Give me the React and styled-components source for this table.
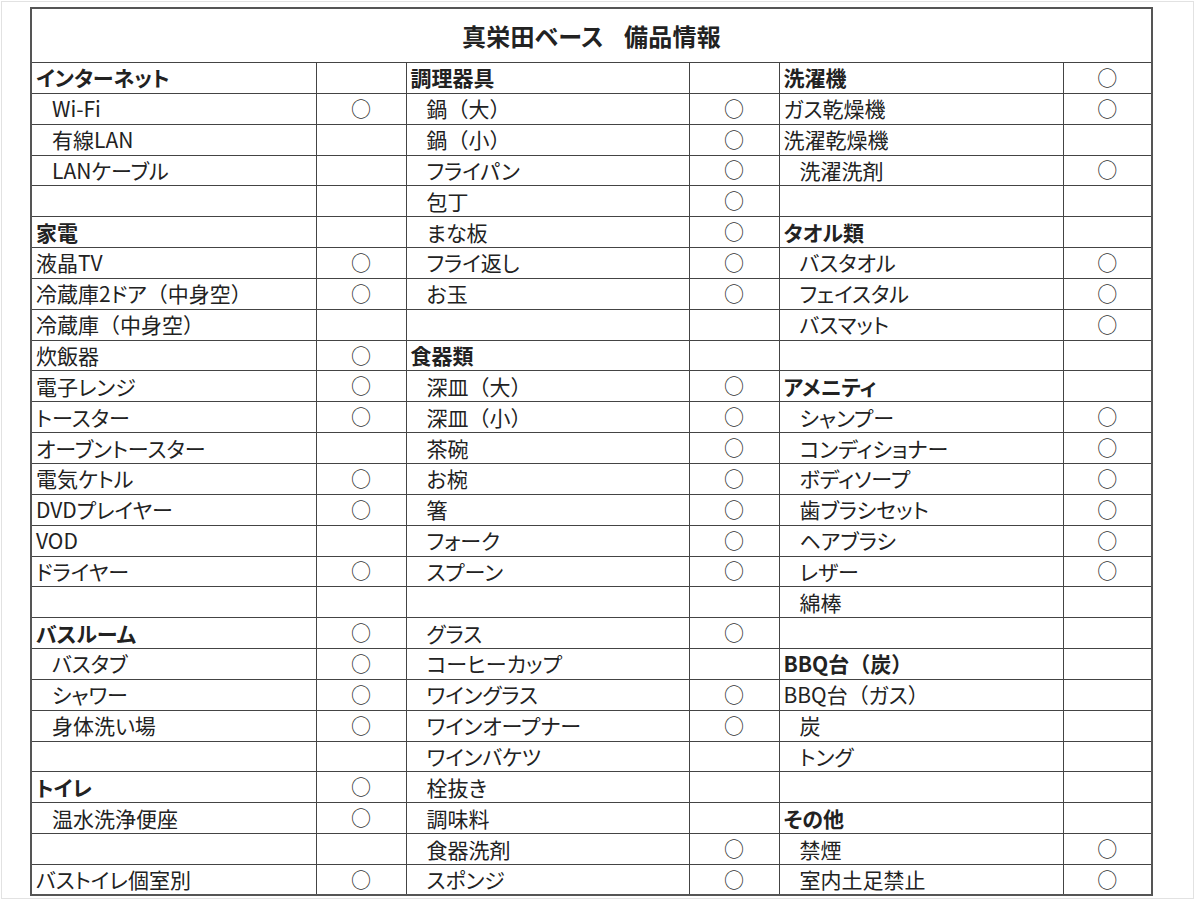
import styled, { createGlobalStyle } from "styled-components";

const GlobalStyle = createGlobalStyle`
  html, body {
    margin: 0;
    padding: 0;
    background: #ffffff;
  }
  body {
    font-family: "Noto Sans CJK JP", "Noto Sans", sans-serif;
    color: #222;
  }
`;

const Page = styled.div`
  box-sizing: border-box;
  width: 1193px;
  height: 898px;
  margin: 1px 0 0 1px;
  border: 1px solid #e2e2e2;
  padding: 5px 0 0 28px;
`;

const Sheet = styled.table`
  border-collapse: collapse;
  table-layout: fixed;
  width: 1121px;
  border: 2px solid #555;
  font-feature-settings: "palt";
`;

const Col = styled.col`
  width: ${({ $w }) => $w}px;
`;

const TitleCell = styled.th`
  height: 53px;
  padding: 0;
  border: 1px solid #444;
  font-size: 24px;
  font-weight: 700;
  color: #222;
  text-align: center;
  vertical-align: middle;
  letter-spacing: 0.3px;
`;

const TitleGap = styled.span`
  display: inline-block;
  width: 20px;
`;

const Row = styled.tr`
  height: 30.85px;
`;

const Label = styled.td`
  padding: 0 0 0 ${({ $indent }) => ($indent ? "20px" : "4px")};
  border: 1px solid #444;
  font-size: 21px;
  line-height: 1;
  font-weight: ${({ $bold }) => ($bold ? 700 : 400)};
  color: #222;
  white-space: nowrap;
  overflow: hidden;
  vertical-align: middle;
`;

// full-width brackets keep their full em, as in the original sheet
const Paren = styled.span`
  font-feature-settings: normal;
`;

const Mark = styled.td`
  padding: 0;
  border: 1px solid #444;
  font-size: 20px;
  line-height: 1;
  color: #333;
  text-align: center;
  vertical-align: middle;
`;

// [label, mark, type] type: b = bold header, i = indented, n = plain
const col1 = [
  ["インターネット", "", "b"],
  ["Wi-Fi", "○", "i"],
  ["有線LAN", "", "i"],
  ["LANケーブル", "", "i"],
  ["", "", "n"],
  ["家電", "", "b"],
  ["液晶TV", "○", "n"],
  ["冷蔵庫2ドア（中身空）", "○", "n"],
  ["冷蔵庫（中身空）", "", "n"],
  ["炊飯器", "○", "n"],
  ["電子レンジ", "○", "n"],
  ["トースター", "○", "n"],
  ["オーブントースター", "", "n"],
  ["電気ケトル", "○", "n"],
  ["DVDプレイヤー", "○", "n"],
  ["VOD", "", "n"],
  ["ドライヤー", "○", "n"],
  ["", "", "n"],
  ["バスルーム", "○", "b"],
  ["バスタブ", "○", "i"],
  ["シャワー", "○", "i"],
  ["身体洗い場", "○", "i"],
  ["", "", "n"],
  ["トイレ", "○", "b"],
  ["温水洗浄便座", "○", "i"],
  ["", "", "n"],
  ["バストイレ個室別", "○", "n"],
];

const col2 = [
  ["調理器具", "", "b"],
  ["鍋（大）", "○", "i"],
  ["鍋（小）", "○", "i"],
  ["フライパン", "○", "i"],
  ["包丁", "○", "i"],
  ["まな板", "○", "i"],
  ["フライ返し", "○", "i"],
  ["お玉", "○", "i"],
  ["", "", "n"],
  ["食器類", "", "b"],
  ["深皿（大）", "○", "i"],
  ["深皿（小）", "○", "i"],
  ["茶碗", "○", "i"],
  ["お椀", "○", "i"],
  ["箸", "○", "i"],
  ["フォーク", "○", "i"],
  ["スプーン", "○", "i"],
  ["", "", "n"],
  ["グラス", "○", "i"],
  ["コーヒーカップ", "", "i"],
  ["ワイングラス", "○", "i"],
  ["ワインオープナー", "○", "i"],
  ["ワインバケツ", "", "i"],
  ["栓抜き", "", "i"],
  ["調味料", "", "i"],
  ["食器洗剤", "○", "i"],
  ["スポンジ", "○", "i"],
];

const col3 = [
  ["洗濯機", "○", "b"],
  ["ガス乾燥機", "○", "n"],
  ["洗濯乾燥機", "", "n"],
  ["洗濯洗剤", "○", "i"],
  ["", "", "n"],
  ["タオル類", "", "b"],
  ["バスタオル", "○", "i"],
  ["フェイスタル", "○", "i"],
  ["バスマット", "○", "i"],
  ["", "", "n"],
  ["アメニティ", "", "b"],
  ["シャンプー", "○", "i"],
  ["コンディショナー", "○", "i"],
  ["ボディソープ", "○", "i"],
  ["歯ブラシセット", "○", "i"],
  ["ヘアブラシ", "○", "i"],
  ["レザー", "○", "i"],
  ["綿棒", "", "i"],
  ["", "", "n"],
  ["BBQ台（炭）", "", "b"],
  ["BBQ台（ガス）", "", "n"],
  ["炭", "", "i"],
  ["トング", "", "i"],
  ["", "", "n"],
  ["その他", "", "b"],
  ["禁煙", "○", "i"],
  ["室内土足禁止", "○", "i"],
];

const widths = [285, 90, 283, 90, 284, 89];

const withParens = (text) =>
  text
    .split(/([（）])/)
    .map((part, i) =>
      part === "（" || part === "）" ? <Paren key={i}>{part}</Paren> : part
    );

const Cells = ({ item }) => {
  const [text, mark, type] = item;
  return (
    <>
      <Label $bold={type === "b"} $indent={type === "i"}>
        {withParens(text)}
      </Label>
      <Mark>{mark}</Mark>
    </>
  );
};

export default function App() {
  return (
    <>
      <GlobalStyle />
      <Page>
        <Sheet>
          <colgroup>
            {widths.map((w, i) => (
              <Col key={i} $w={w} />
            ))}
          </colgroup>
          <thead>
            <tr>
              <TitleCell colSpan={6}>
                真栄田ベース
                <TitleGap />
                備品情報
              </TitleCell>
            </tr>
          </thead>
          <tbody>
            {col1.map((item, i) => (
              <Row key={i}>
                <Cells item={item} />
                <Cells item={col2[i]} />
                <Cells item={col3[i]} />
              </Row>
            ))}
          </tbody>
        </Sheet>
      </Page>
    </>
  );
}
